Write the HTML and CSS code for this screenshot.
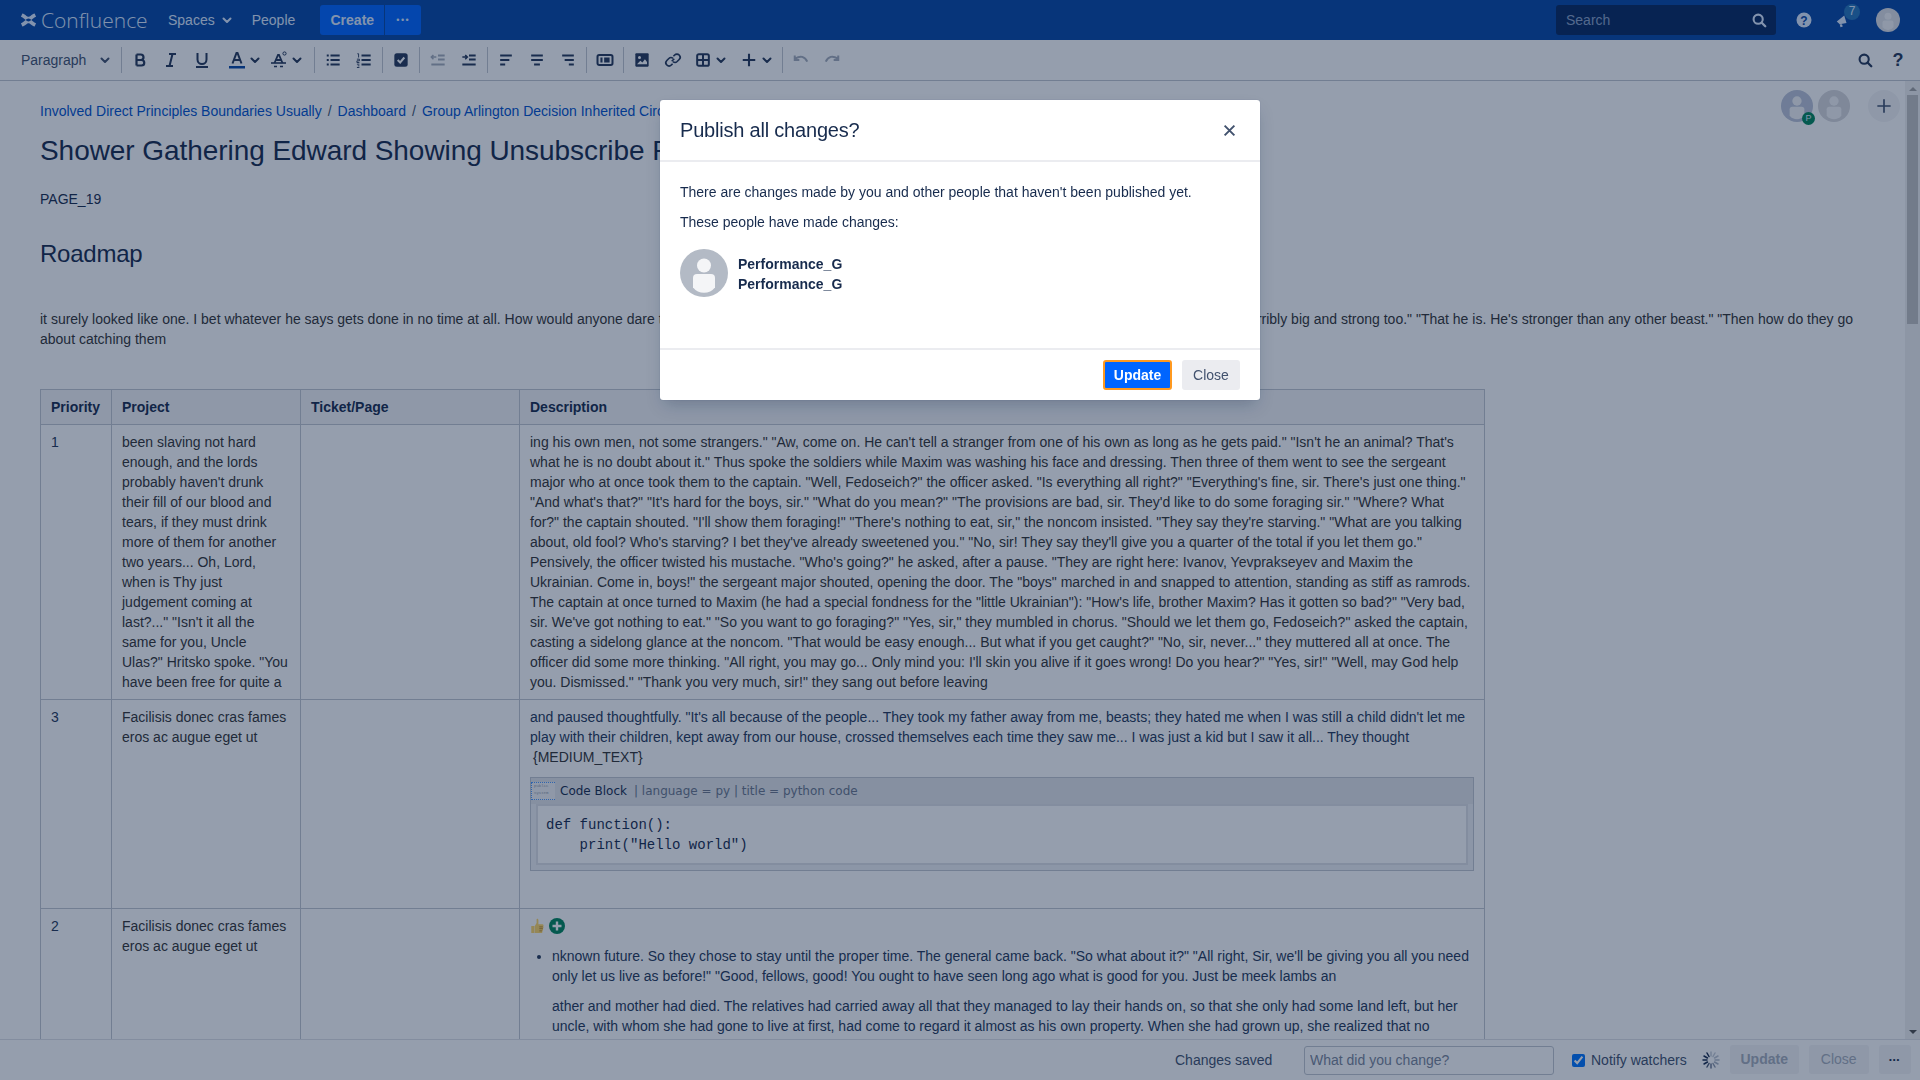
FILE: index.html
```html
<!DOCTYPE html>
<html lang="en">
  <head>
    <meta charset="UTF-8" />
    <title>Publish all changes? - Confluence</title>
    <link rel="stylesheet" href="styles.css">
  </head>
  <body>
    <svg class="sprite" xmlns="http://www.w3.org/2000/svg">
      <symbol id="chev" viewBox="0 0 12 12"><path d="M2.500 4.500 6 8l3.500-3.500" fill="none" stroke="currentColor" stroke-width="2" stroke-linecap="round" stroke-linejoin="round"/></symbol>
      <symbol id="person" viewBox="0 0 48 48"><circle cx="24" cy="24" r="24" fill="currentColor"/><circle cx="24" cy="16.500" r="7" fill="#f4f5f7"/><path d="M13 29a4 4 0 0 1 4-4h14a4 4 0 0 1 4 4v9.500a14 14 0 0 1-22 0z" fill="#f4f5f7"/></symbol>
      <symbol id="search" viewBox="0 0 24 24"><circle cx="11" cy="11" r="5.500" fill="none" stroke="currentColor" stroke-width="2.500"/><path d="m15 15 4.500 4.500" stroke="currentColor" stroke-width="2.800" stroke-linecap="round"/></symbol>
    </svg>

    <header class="topbar">
      <div class="logo">
        <svg class="logo-mark" viewBox="0 0 18 16"><path d="M1 11.500c3.500-1 5.500-5 8-5s4.500 4 8 5l-1.500 3.500c-3-.5-4.500-3.500-6.500-3.500s-3.500 3-6.500 3.500zM1 4.500c3.500 1 5.500 5 8 5s4.500-4 8-5L15.500 1C12.500 1.500 11 4.500 9 4.500S5.500 1.500 2.500 1z" fill="currentColor"/></svg>
        <span class="logo-text">Confluence</span>
      </div>
      <a class="nav-link nav-spaces">Spaces <svg class="nav-chev"><use href="#chev"/></svg></a>
      <a class="nav-link nav-people">People</a>
      <button class="btn-create">Create</button>
      <button class="btn-create-more">&#8226;&#8226;&#8226;</button>

      <div class="search-box">
        <span>Search</span>
        <svg class="search-icon"><use href="#search"/></svg>
      </div>
      <svg class="help-icon" viewBox="0 0 24 24"><circle cx="12" cy="12" r="7.500" fill="currentColor"/><text x="12" y="16.500" text-anchor="middle" class="help-mark">?</text></svg>
      <div class="notif">
        <svg class="notif-icon" viewBox="0 0 24 24"><path d="M5 14 15 6l3 10-9 1.500zM9 18l3-.5 1 3-3 1z" fill="currentColor"/></svg>
        <span class="notif-badge">7</span>
      </div>
      <svg class="top-avatar"><use href="#person"/></svg>
    </header>

    <div class="toolbar">
      <div class="tb-group tb-format">
        <span>Paragraph</span>
        <svg class="chev"><use href="#chev"/></svg>
      </div>
      <div class="tb-group">
        <button class="tb"><svg viewBox="2 2 20 20"><path d="M8.500 6.500v11M8.500 6.500h4.250a2.750 2.750 0 0 1 0 5.500H8.500m0 0h5a2.750 2.750 0 0 1 0 5.500h-5" fill="none" stroke="currentColor" stroke-width="2.200" stroke-linejoin="round"/></svg></button>
        <button class="tb"><svg viewBox="2 2 20 20"><path d="M10 6h7M7 18h7M13.500 6l-3 12" fill="none" stroke="currentColor" stroke-width="2"/></svg></button>
        <button class="tb"><svg viewBox="2 2 20 20"><path d="M7.500 5v6.500a4.500 4.500 0 0 0 9 0V5" fill="none" stroke="currentColor" stroke-width="2"/><path d="M6 19h12" stroke="currentColor" stroke-width="2"/></svg></button>
        <button class="tb-dd tb-dd-color"><svg class="ico" viewBox="2 2 20 20"><path d="m7.500 15.500 4-10.500h1l4 10.500M9 12h6" fill="none" stroke="currentColor" stroke-width="2"/><rect x="4" y="18" width="16" height="2.500" fill="#0747a6"/></svg><svg class="chev"><use href="#chev"/></svg></button>
        <button class="tb-dd tb-dd-more"><svg class="ico" viewBox="2 2 20 20"><path d="m7.500 15 3.500-8h1l3.500 8M9.500 12h5" fill="none" stroke="currentColor" stroke-width="1.800"/><path d="M4 15h15" stroke="currentColor" stroke-width="1.600"/><path d="M7 18.500h3M13 18.500h3" stroke="currentColor" stroke-width="1.600"/><circle cx="17.500" cy="5.500" r="1.600" fill="none" stroke="currentColor" stroke-width="1"/></svg><svg class="chev"><use href="#chev"/></svg></button>
      </div>
      <div class="tb-group">
        <button class="tb"><svg viewBox="0 0 24 24"><path d="M9 6.500h11M9 12h11M9 17.500h11M4.500 6.500h2.400M4.500 12h2.400M4.500 17.500h2.400" stroke="currentColor" stroke-width="2.400"/></svg></button>
        <button class="tb"><svg viewBox="0 0 24 24"><path d="M9 6.500h11M9 12h11M9 17.500h11" stroke="currentColor" stroke-width="2.400"/><path d="M4 4.500h1.500V9M3.500 11h3v2h-3v2h3M3.500 17h3M4.500 19h2M3.500 21h3" fill="none" stroke="currentColor" stroke-width="1.100"/></svg></button>
      </div>
      <div class="tb-group">
        <button class="tb"><svg viewBox="0 0 24 24"><rect x="4" y="4" width="16" height="16" rx="3" fill="currentColor"/><path d="m8 12 3 3 5-6" fill="none" stroke="#fff" stroke-width="2.400"/></svg></button>
      </div>
      <div class="tb-group">
        <button class="tb tb-off"><svg viewBox="0 0 24 24"><path d="M12 6.500h8M12 11.500h8M4 17.500h16" stroke="currentColor" stroke-width="2.400"/><path d="M4 8.500h6M6.500 6 4 8.500 6.500 11" fill="none" stroke="currentColor" stroke-width="1.800"/></svg></button>
        <button class="tb"><svg viewBox="0 0 24 24"><path d="M12 6.500h8M12 11.500h8M4 17.500h16" stroke="currentColor" stroke-width="2.400"/><path d="M4 8.500h6M7.500 6l2.500 2.500L7.500 11" fill="none" stroke="currentColor" stroke-width="1.800"/></svg></button>
      </div>
      <div class="tb-group">
        <button class="tb"><svg viewBox="0 0 24 24"><path d="M5 6.500h14M5 12h11M5 17.500h6" stroke="currentColor" stroke-width="2.400"/></svg></button>
        <button class="tb"><svg viewBox="0 0 24 24"><path d="M5 6.500h14M5 12h14M8.500 17.500h7" stroke="currentColor" stroke-width="2.400"/></svg></button>
        <button class="tb"><svg viewBox="0 0 24 24"><path d="M5 6.500h14M8 12h11M13 17.500h6" stroke="currentColor" stroke-width="2.400"/></svg></button>
      </div>
      <div class="tb-group">
        <button class="tb"><svg viewBox="0 0 24 24"><rect x="3" y="6" width="18" height="12" rx="2" fill="none" stroke="currentColor" stroke-width="2.400"/><path d="M6.500 9H9v6H6.500zM11 9h6.500v6H11z" fill="currentColor"/></svg></button>
      </div>
      <div class="tb-group">
        <button class="tb"><svg viewBox="0 0 24 24"><path d="M5 4h14a1 1 0 0 1 1 1v14a1 1 0 0 1-1 1H5a1 1 0 0 1-1-1V5a1 1 0 0 1 1-1z" fill="currentColor"/><circle cx="9" cy="9" r="1.800" fill="#fff"/><path d="m6 17 4-4 2.500 2 3-4 2.500 3.500V17z" fill="#fff"/></svg></button>
        <button class="tb"><svg viewBox="0 0 24 24"><path d="m10.500 13.500 3-3M12.500 7.500 14 6a3.800 3.800 0 0 1 5.400 5.400L17 13.800a3.800 3.800 0 0 1-5 .2M11.500 16.500 10 18a3.800 3.800 0 0 1-5.400-5.400L7 10.200a3.800 3.800 0 0 1 5-.2" fill="none" stroke="currentColor" stroke-width="2"/></svg></button>
        <button class="tb-dd"><svg class="ico" viewBox="0 0 24 24"><rect x="5" y="5" width="14" height="14" rx="2" fill="none" stroke="currentColor" stroke-width="2.400"/><path d="M12 5v14M5 12h14" stroke="currentColor" stroke-width="2.400"/></svg><svg class="chev"><use href="#chev"/></svg></button>
        <button class="tb-dd tb-dd-plus"><svg class="ico" viewBox="0 0 24 24"><path d="M12 4.500v15M4.500 12h15" stroke="currentColor" stroke-width="2.500"/></svg><svg class="chev"><use href="#chev"/></svg></button>
      </div>
      <div class="tb-group tb-last">
        <button class="tb tb-off"><svg viewBox="0 0 24 24"><path d="M5.500 10c5.500-3.500 11-2.500 14 4M4.500 6.500v5.500h5.500" fill="none" stroke="currentColor" stroke-width="2.400"/></svg></button>
        <button class="tb tb-off"><svg viewBox="0 0 24 24"><path d="M18.500 10c-5.500-3.500-11-2.500-14 4M19.500 6.500v5.500H14" fill="none" stroke="currentColor" stroke-width="2.400"/></svg></button>
      </div>
      <div class="tb-right">
        <button class="tb"><svg viewBox="0 0 24 24"><use href="#search"/></svg></button>
        <button class="tb tb-q">?</button>
      </div>
    </div>

    <div class="main">
      <div class="content">
        <div class="collaborators">
          <span class="collab">
            <svg class="collab-me"><use href="#person"/></svg>
            <span class="collab-badge">P</span>
          </span>
          <svg class="collab-other"><use href="#person"/></svg>
          <button class="collab-add"><svg viewBox="0 0 24 24"><path d="M12 4v16M4 12h16" stroke="currentColor" stroke-width="2"/></svg></button>
        </div>

        <div class="breadcrumbs">
          <a>Involved Direct Principles Boundaries Usually</a><span>/</span><a>Dashboard</a><span>/</span><a>Group Arlington Decision Inherited Circular</a>
        </div>
        <h1>Shower Gathering Edward Showing Unsubscribe Principles</h1>
        <p class="page-label">PAGE_19</p>
        <h2>Roadmap</h2>
        <p class="intro">it surely looked like one. I bet whatever he says gets done in no time at all. How would anyone dare to go near a beast like that? They say those creatures in the hills of the far southern lands, are terribly big and strong too." "That he is. He's stronger than any other beast." "Then how do they go about catching them</p>

        <table class="roadmap">
          <colgroup>
            <col class="col-priority"><col class="col-project"><col class="col-ticket"><col class="col-desc">
          </colgroup>
          <thead>
            <tr><th>Priority</th><th>Project</th><th>Ticket/Page</th><th>Description</th></tr>
          </thead>
          <tbody>
            <tr>
              <td class="num">1</td>
              <td>been slaving not hard enough, and the lords probably haven't drunk their fill of our blood and tears, if they must drink more of them for another two years... Oh, Lord, when is Thy just judgement coming at last?..." "Isn't it all the same for you, Uncle Ulas?" Hritsko spoke. "You have been free for quite a</td>
              <td></td>
              <td>ing his own men, not some strangers." "Aw, come on. He can't tell a stranger from one of his own as long as he gets paid." "Isn't he an animal? That's what he is no doubt about it." Thus spoke the soldiers while Maxim was washing his face and dressing. Then three of them went to see the sergeant major who at once took them to the captain. "Well, Fedoseich?" the officer asked. "Is everything all right?" "Everything's fine, sir. There's just one thing." "And what's that?" "It's hard for the boys, sir." "What do you mean?" "The provisions are bad, sir. They'd like to do some foraging sir." "Where? What for?" the captain shouted. "I'll show them foraging!" "There's nothing to eat, sir," the noncom insisted. "They say they're starving." "What are you talking about, old fool? Who's starving? I bet they've already sweetened you." "No, sir! They say they'll give you a quarter of the total if you let them go." Pensively, the officer twisted his mustache. "Who's going?" he asked, after a pause. "They are right here: Ivanov, Yevprakseyev and Maxim the Ukrainian. Come in, boys!" the sergeant major shouted, opening the door. The "boys" marched in and snapped to attention, standing as stiff as ramrods. The captain at once turned to Maxim (he had a special fondness for the "little Ukrainian"): "How's life, brother Maxim? Has it gotten so bad?" "Very bad, sir. We've got nothing to eat." "So you want to go foraging?" "Yes, sir," they mumbled in chorus. "Should we let them go, Fedoseich?" asked the captain, casting a sidelong glance at the noncom. "That would be easy enough... But what if you get caught?" "No, sir, never..." they muttered all at once. The officer did some more thinking. "All right, you may go... Only mind you: I'll skin you alive if it goes wrong! Do you hear?" "Yes, sir!" "Well, may God help you. Dismissed." "Thank you very much, sir!" they sang out before leaving</td>
            </tr>
            <tr>
              <td class="num">3</td>
              <td>Facilisis donec cras fames eros ac augue eget ut</td>
              <td></td>
              <td>
                <p class="blue-text">and paused thoughtfully. "It's all because of the people... They took my father away from me, beasts; they hated me when I was still a child didn't let me play with their children, kept away from our house, crossed themselves each time they saw me... I was just a kid but I saw it all... They thought</p>
                <p class="medium-text">{MEDIUM_TEXT}</p>
                <div class="code-macro">
                  <div class="code-head">
                    <span class="code-thumb">public<br>System</span>
                    <span class="code-name">Code Block</span>
                    <span class="code-params">| language = py | title = python code</span>
                  </div>
                  <pre class="code-body">def function():
    print("Hello world")</pre>
                </div>
                <p class="empty-line">&nbsp;</p>
              </td>
            </tr>
            <tr>
              <td class="num">2</td>
              <td>Facilisis donec cras fames eros ac augue eget ut</td>
              <td></td>
              <td>
                <div class="reactions">
                  <svg class="thumb" viewBox="0 0 16 18"><path d="M1 9h3.500v8H1zM5 9l2-3.500V1.500C7 .5 9 .5 9 2.500V7h4.500c1.500 0 1.500 2 1 2.500.5.500.5 2-.5 2.500.5.500.5 2-.5 2.500.3.800 0 2.500-1.500 2.500H5z" fill="#ffd766"/><path d="M10 10h4M10 12h4M10 14.500h3" stroke="#b8862a" stroke-width="1"/></svg>
                  <svg class="react-add" viewBox="0 0 16 16"><circle cx="8" cy="8" r="8" fill="currentColor"/><path d="M8 3.500v9M3.500 8h9" stroke="#fff" stroke-width="2.400"/></svg>
                </div>
                <ul class="desc-list">
                  <li>
                    nknown future. So they chose to stay until the proper time. The general came back. "So what about it?" "All right, Sir, we'll be giving you all you need only let us live as before!" "Good, fellows, good! You ought to have seen long ago what is good for you. Just be meek lambs an
                    <p>ather and mother had died. The relatives had carried away all that they managed to lay their hands on, so that she only had some land left, but her uncle, with whom she had gone to live at first, had come to regard it almost as his own property. When she had grown up, she realized that no</p>
                  </li>
                </ul>
              </td>
            </tr>
          </tbody>
        </table>
      </div>
      <div class="scrollbar">
        <span class="arrow-up"></span>
        <span class="thumb-bar"></span>
        <span class="arrow-down"></span>
      </div>
    </div>

    <footer class="save-bar">
      <span class="save-status">Changes saved</span>
      <input class="save-comment" type="text" placeholder="What did you change?" />
      <label class="notify"><input type="checkbox" checked /> Notify watchers</label>
      <svg class="spinner" viewBox="0 0 20 20">
        <g stroke-width="1.500" stroke-linecap="round">
          <path d="M10 2v4" stroke="#c6ccd6"/><path d="m14 3-2 3.500" stroke="#c6ccd6"/><path d="m17 6-3.500 2" stroke="#bcc3cf"/><path d="M18 10h-4" stroke="#b4bcc9"/><path d="m17 14-3.500-2" stroke="#a9b2c1"/><path d="m14 17-2-3.500" stroke="#8f99ab"/><path d="M10 18v-4" stroke="#6b7890"/><path d="m6 17 2-3.500" stroke="#4a5a75"/><path d="m3 14 3.500-2" stroke="#172b4d"/><path d="M2 10h4" stroke="#172b4d"/><path d="m3 6 3.500 2" stroke="#172b4d"/><path d="m6 3 2 3.500" stroke="#172b4d"/>
        </g>
      </svg>
      <button class="save-btn save-update">Update</button>
      <button class="save-btn save-close">Close</button>
      <button class="save-btn save-more">&#8226;&#8226;&#8226;</button>
    </footer>

    <div class="blanket"></div>

    <div class="dialog">
      <div class="dialog-head">
        <h3>Publish all changes?</h3>
        <svg class="dialog-x" viewBox="0 0 12 12"><path d="m1.500 1.500 9 9M10.500 1.500l-9 9" stroke="currentColor" stroke-width="1.800"/></svg>
      </div>
      <div class="dialog-body">
        <p>There are changes made by you and other people that haven't been published yet.</p>
        <p>These people have made changes:</p>
        <div class="editor">
          <svg class="editor-avatar"><use href="#person"/></svg>
          <div class="editor-names">
            <strong>Performance_G</strong>
            <strong>Performance_G</strong>
          </div>
        </div>
      </div>
      <div class="dialog-foot">
        <button class="btn-primary">Update</button>
        <button class="btn-plain">Close</button>
      </div>
    </div>
  </body>
</html>
```

FILE: styles.css
```css
* {
  box-sizing: border-box;
}
html,
body {
  height: 100%;
}
body {
  margin: 0;
  display: flex;
  flex-direction: column;
  overflow: hidden;
  font-family: "Liberation Sans", Arial, sans-serif;
  font-size: 14px;
  line-height: 20px;
  color: #172b4d;
  background: #fff;
}
button {
  font-family: inherit;
  border: none;
  background: none;
  padding: 0;
}
p {
  margin: 0;
}
.sprite {
  display: none;
}

/* top bar */
.topbar {
  height: 40px;
  flex: none;
  display: flex;
  align-items: center;
  padding: 0 20px;
  background: #0747a6;
  color: #deebff;
}
.logo {
  display: flex;
  align-items: center;
  gap: 4px;
}
.logo-mark {
  width: 17px;
  height: 16px;
}
.logo-text {
  font-family: "Open Sans", sans-serif;
  font-weight: 300;
  font-size: 21px;
  width: 107px;
}
.nav-link {
  display: flex;
  align-items: center;
}
.nav-spaces {
  margin-left: 20px;
  gap: 6px;
}
.nav-chev {
  width: 12px;
  height: 12px;
}
.nav-people {
  margin-left: 19px;
}
.btn-create,
.btn-create-more {
  height: 30px;
  background: #0065ff;
  color: #deebff;
  font-size: 14px;
}
.btn-create {
  margin-left: 25px;
  width: 64px;
  font-weight: bold;
  border-radius: 3px 0 0 3px;
}
.btn-create-more {
  margin-left: 1px;
  width: 36px;
  font-size: 9px;
  letter-spacing: 1.500px;
  border-radius: 0 3px 3px 0;
}
.search-box {
  margin-left: auto;
  width: 220px;
  height: 30px;
  display: flex;
  align-items: center;
  justify-content: space-between;
  padding: 0 7px 0 10px;
  border-radius: 3px;
  background: #07285f;
  color: #8ba2c7;
}
.search-icon {
  width: 20px;
  height: 20px;
  color: #deebff;
}
.help-icon {
  margin-left: 16px;
  width: 24px;
  height: 24px;
}
.help-mark {
  font-size: 12px;
  font-weight: bold;
  fill: #0747a6;
}
.notif {
  position: relative;
  margin-left: 17px;
  width: 21px;
  height: 24px;
}
.notif-icon {
  width: 18px;
  height: 24px;
}
.notif-badge {
  position: absolute;
  top: -4px;
  left: 11px;
  width: 16px;
  height: 16px;
  border-radius: 50%;
  background: #2576bc;
  text-align: center;
  font-size: 12px;
  line-height: 14px;
}
.top-avatar {
  margin-left: 22px;
  width: 24px;
  height: 24px;
  color: #dfe1e6;
}

/* editor toolbar */
.toolbar {
  height: 41px;
  flex: none;
  display: flex;
  align-items: center;
  padding-right: 7px;
  border-bottom: 1px solid #c1c7d0;
  background: #fff;
  color: #253858;
}
.tb-group {
  height: 26px;
  display: flex;
  align-items: center;
  gap: 1px;
  padding: 0 3px;
  border-right: 1px solid #c1c7d0;
}
.tb-format {
  width: 122px;
  justify-content: space-between;
  padding: 0 10px 0 21px;
  color: #42526e;
}
.tb-last {
  border-right: none;
}
.tb,
.tb-dd {
  height: 30px;
  display: flex;
  align-items: center;
  justify-content: center;
  color: #253858;
}
.tb {
  width: 30px;
}
.tb svg {
  width: 20px;
  height: 20px;
}
.tb-dd {
  gap: 2px;
  padding: 0 4px;
}
.tb-dd .ico {
  width: 20px;
  height: 20px;
}
.chev {
  width: 12px;
  height: 12px;
}
.tb-dd-color {
  margin-left: 5px;
}
.tb-dd-more {
  margin-left: -1px;
  margin-right: 4px;
}
.tb-dd-plus {
  margin-left: 3px;
  margin-right: 2px;
}
.tb-off {
  color: #a5adba;
}
.tb-right {
  margin-left: auto;
  display: flex;
  gap: 3px;
}
.tb-q {
  font-size: 18px;
  font-weight: bold;
}

/* page content */
.main {
  flex: 1;
  min-height: 0;
  display: flex;
}
.content {
  position: relative;
  flex: 1;
  min-width: 0;
  overflow: hidden;
  padding: 20px 40px 0;
}
.collaborators {
  position: absolute;
  top: 9px;
  right: 5px;
  display: flex;
  align-items: center;
}
.collab {
  position: relative;
  display: flex;
}
.collab-me,
.collab-other {
  width: 32px;
  height: 32px;
}
.collab-me {
  color: #bcc4d8;
}
.collab-other {
  margin-left: 5px;
  color: #d8d8dc;
}
.collab-badge {
  position: absolute;
  right: -2px;
  bottom: -3px;
  width: 13px;
  height: 13px;
  border-radius: 50%;
  background: #00875a;
  color: #deebff;
  font-size: 9px;
  line-height: 13px;
  text-align: center;
}
.collab-add {
  margin-left: 18px;
  width: 32px;
  height: 32px;
  border-radius: 50%;
  background: #f4f5f7;
  color: #42526e;
  display: flex;
  align-items: center;
  justify-content: center;
}
.collab-add svg {
  width: 20px;
  height: 20px;
}
.breadcrumbs {
  display: flex;
  color: #42526e;
}
.breadcrumbs a {
  color: #0052cc;
}
.breadcrumbs span {
  margin: 0 6px;
}
h1 {
  margin: 14px 0 0;
  font-size: 28px;
  line-height: 32px;
  font-weight: normal;
  letter-spacing: -0.06px;
}
.page-label {
  margin-top: 22px;
}
h2 {
  margin: 30px 0 0;
  font-size: 24px;
  line-height: 30px;
  font-weight: normal;
  letter-spacing: -0.24px;
}
.intro {
  margin-top: 40px;
  color: #333;
}

/* roadmap table */
.roadmap {
  margin-top: 40px;
  width: 1445px;
  table-layout: fixed;
  border-collapse: collapse;
}
.col-priority {
  width: 71px;
}
.col-project {
  width: 189px;
}
.col-ticket {
  width: 219px;
}
.roadmap th,
.roadmap td {
  padding: 7px 10px;
  border: 1px solid #c1c7d0;
  text-align: left;
  vertical-align: top;
}
.roadmap th {
  background: #f4f5f7;
}
.roadmap td {
  color: #333;
}
.roadmap .num {
  color: #253858;
}
.roadmap .blue-text {
  color: #253858;
}
.medium-text {
  padding-left: 3px;
}
.code-macro {
  margin: 10px 0;
  padding: 0 5px 5px;
  border: 1px solid #c1c7d0;
  background: #f0f1f4;
}
.code-head {
  height: 26px;
  margin: 0 -5px;
  display: flex;
  align-items: center;
  background: #e4e6ea;
  font-family: "DejaVu Sans", sans-serif;
  font-size: 12px;
}
.code-thumb {
  width: 24px;
  height: 18px;
  margin-right: 5px;
  padding-left: 2px;
  border-top: 1px dotted #4c9aff;
  border-bottom: 1px dotted #4c9aff;
  border-left: 1px dotted #4c9aff;
  background: #f4f5f7;
  color: #97a0af;
  font-family: "Liberation Mono", monospace;
  font-size: 4px;
  line-height: 7px;
  overflow: hidden;
}
.code-name {
  color: #172b4d;
}
.code-params {
  margin-left: 7px;
  color: #6b778c;
}
.code-body {
  margin: 0;
  padding: 9px 8px 8px;
  border: 2px solid #dfe1e6;
  background: #fff;
  color: #172b4d;
  font-family: "Liberation Mono", monospace;
  font-size: 14px;
  line-height: 20px;
}
.reactions {
  height: 20px;
  display: flex;
  align-items: center;
  gap: 4px;
}
.thumb {
  width: 15px;
  height: 16px;
}
.react-add {
  width: 16px;
  height: 16px;
  color: #00875a;
}
.desc-list {
  margin: 10px 0 0;
  padding-left: 22px;
  color: #253858;
}
.desc-list p {
  margin-top: 10px;
}

/* fake scrollbar, page scroll is not live here */
.scrollbar {
  width: 15px;
  flex: none;
  display: flex;
  flex-direction: column;
  align-items: center;
  background: #f1f1f1;
}
.arrow-up {
  margin: 6px 0 4px;
  border: 4px solid transparent;
  border-top: none;
  border-bottom: 4px solid #a3a3a3;
}
.thumb-bar {
  width: 11px;
  height: 229px;
  background: #c1c1c1;
}
.arrow-down {
  margin: auto 0 5px;
  border: 4px solid transparent;
  border-bottom: none;
  border-top: 4px solid #505050;
}

/* save bar */
.save-bar {
  height: 41px;
  flex: none;
  display: flex;
  align-items: center;
  border-top: 1px solid #dfe1e6;
  background: #fff;
  white-space: nowrap;
}
.save-bar > * {
  flex: none;
}
.save-status {
  margin-left: 1175px;
  width: 129px;
  color: #42526e;
}
.save-comment {
  width: 250px;
  height: 29px;
  padding: 0 5px;
  border: 1px solid #c1c7d0;
  border-radius: 3px;
  font: inherit;
  color: #42526e;
}
.save-comment::placeholder {
  color: #7a869a;
}
.notify {
  margin-left: 18px;
  display: flex;
  align-items: center;
  gap: 6px;
  color: #42526e;
}
.notify input {
  margin: 0;
  width: 13px;
  height: 13px;
}
.spinner {
  margin-left: 14px;
  width: 20px;
  height: 20px;
}
.save-btn {
  height: 29px;
  margin-bottom: 2px;
  border-radius: 3px;
  background: #f4f5f7;
  color: #a5adba;
  font-size: 14px;
}
.save-update {
  margin-left: 9px;
  width: 69px;
  font-weight: bold;
}
.save-close {
  margin-left: 10px;
  width: 60px;
}
.save-more {
  margin-left: 10px;
  width: 32px;
  font-size: 8px;
  letter-spacing: 1px;
  color: #172b4d;
}

/* modal */
.blanket {
  position: fixed;
  inset: 0;
  background: rgba(9, 30, 66, 0.43);
}
.dialog {
  position: fixed;
  top: 100px;
  left: 660px;
  width: 600px;
  height: 300px;
  display: flex;
  flex-direction: column;
  border-radius: 3px;
  background: #fff;
  box-shadow: 0 8px 16px -4px rgba(9, 30, 66, 0.25), 0 0 1px rgba(9, 30, 66, 0.31);
}
.dialog-head {
  height: 62px;
  flex: none;
  display: flex;
  align-items: center;
  justify-content: space-between;
  padding: 0 20px;
  border-bottom: 2px solid #ebecf0;
}
.dialog-head h3 {
  margin: 0;
  font-size: 20px;
  line-height: 28px;
  font-weight: normal;
  letter-spacing: -0.2px;
}
.dialog-x {
  width: 13px;
  height: 13px;
  margin-right: 4px;
  color: #42526e;
}
.dialog-body {
  flex: 1;
  padding: 20px 20px 0;
}
.dialog-body p {
  margin-bottom: 10px;
}
.editor {
  margin-top: 17px;
  display: flex;
  align-items: center;
  gap: 10px;
}
.editor-avatar {
  width: 48px;
  height: 48px;
  color: #b3bac5;
}
.editor-names {
  display: flex;
  flex-direction: column;
  padding-top: 2px;
}
.dialog-foot {
  height: 52px;
  flex: none;
  display: flex;
  align-items: flex-start;
  justify-content: flex-end;
  gap: 10px;
  padding: 10px 20px 0;
  border-top: 2px solid #ebecf0;
}
.dialog-foot button {
  height: 30px;
  border-radius: 3px;
  font-size: 14px;
}
.btn-primary {
  width: 69px;
  background: #0065ff;
  color: #fff;
  font-weight: bold;
  border: 2px solid #ff991f;
}
.btn-plain {
  width: 58px;
  background: #ebecf0;
  color: #42526e;
}
```
